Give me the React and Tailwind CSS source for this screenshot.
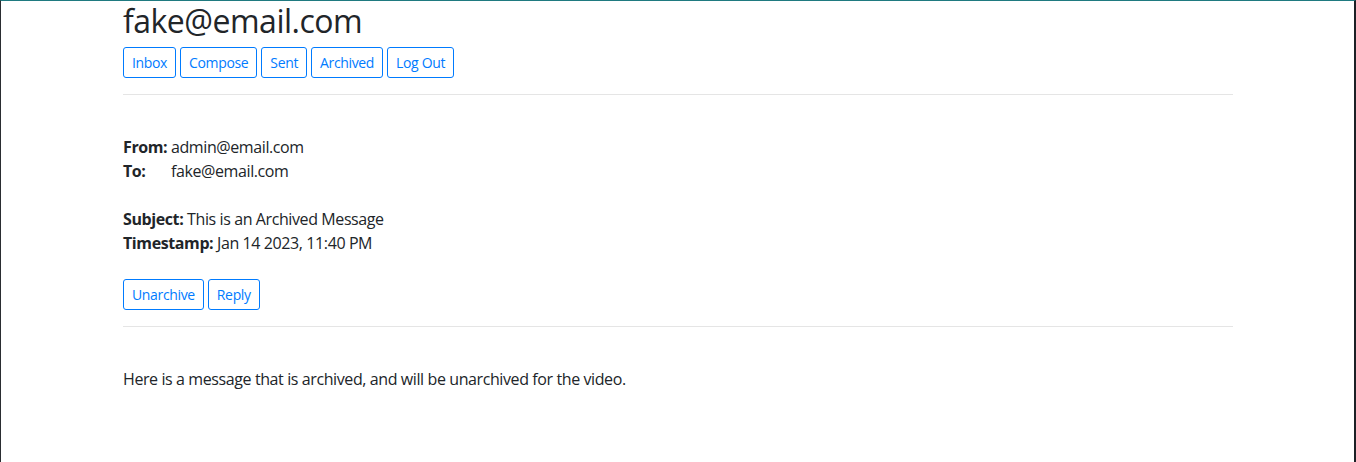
import React from 'react';

const Btn = ({ children }) => (
    <button className="h-[31px] px-2 text-[14px] leading-[21px] tracking-[-0.35px] text-[#007bff] border border-[#007bff] rounded-[3px] bg-white">
        {children}
    </button>
);

export default function App() {
    return (
        <div className="w-[1356px] h-[462px] bg-white border-t border-t-[#1f7a80] border-l border-l-[#2a2d31] border-r-2 border-r-[#1c2126] overflow-hidden text-[#212529] font-['Open_Sans',sans-serif]">
            <div className="ml-[122px] w-[1110px]">
                <h2 className="text-[32px] leading-[38px] font-medium tracking-[-0.5px] mt-[1px]">fake@email.com</h2>
                <div className="flex gap-1 mt-[7px]">
                    <Btn>Inbox</Btn>
                    <Btn>Compose</Btn>
                    <Btn>Sent</Btn>
                    <Btn>Archived</Btn>
                    <Btn>Log Out</Btn>
                </div>
                <hr className="my-4 border-t border-black/10" />
                <div className="pt-[24px] text-[16px] leading-[24px] tracking-[-0.4px]">
                    <div><b className="font-bold">From:</b> admin@email.com</div>
                    <div><b className="font-bold inline-block w-[48px]">To:</b>fake@email.com</div>
                    <div className="h-6" />
                    <div><b className="font-bold">Subject:</b> This is an Archived Message</div>
                    <div><b className="font-bold">Timestamp:</b> Jan 14 2023, 11:40 PM</div>
                </div>
                <div className="flex gap-1 mt-6">
                    <Btn>Unarchive</Btn>
                    <Btn>Reply</Btn>
                </div>
                <hr className="my-4 border-t border-black/10" />
                <p className="pt-[24px] text-[16px] leading-[24px] tracking-[-0.4px]">Here is a message that is archived, and will be unarchived for the video.</p>
            </div>
        </div>
    );
}
